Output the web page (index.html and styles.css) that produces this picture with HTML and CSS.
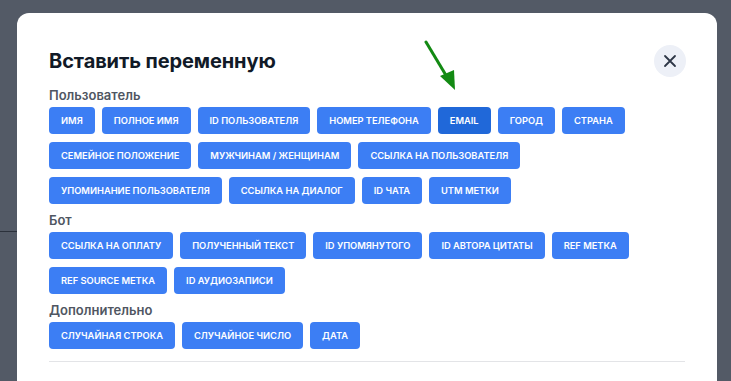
FILE: index.html
```html
<!DOCTYPE html>
<html lang="ru">
<head>
<meta charset="utf-8">
<title>Вставить переменную</title>
<link rel="stylesheet" href="styles.css">
</head>
<body>
<div class="backdrop">
  <div class="bg-line"></div>
  <div class="modal">
    <div class="header">
      <h2 class="title">Вставить переменную</h2>
      <button class="close" aria-label="Закрыть">
        <svg width="14" height="14" viewBox="0 0 14 14"><path d="M2 2 L12 12 M12 2 L2 12" stroke="#2d3646" stroke-width="1.8" stroke-linecap="round"/></svg>
      </button>
    </div>
    <div class="section">
      <div class="label">Пользователь</div>
      <div class="chips">
        <span class="chip">Имя</span>
        <span class="chip">Полное имя</span>
        <span class="chip">ID пользователя</span>
        <span class="chip">Номер телефона</span>
        <span class="chip active">Email</span>
        <span class="chip">Город</span>
        <span class="chip">Страна</span>
        <span class="chip">Семейное положение</span>
        <span class="chip">Мужчинам / Женщинам</span>
        <span class="chip">Ссылка на пользователя</span>
        <span class="chip">Упоминание пользователя</span>
        <span class="chip">Ссылка на диалог</span>
        <span class="chip">ID чата</span>
        <span class="chip">UTM метки</span>
      </div>
    </div>
    <div class="section">
      <div class="label">Бот</div>
      <div class="chips">
        <span class="chip">Ссылка на оплату</span>
        <span class="chip">Полученный текст</span>
        <span class="chip">ID упомянутого</span>
        <span class="chip">ID автора цитаты</span>
        <span class="chip">REF метка</span>
        <span class="chip">REF source метка</span>
        <span class="chip">ID аудиозаписи</span>
      </div>
    </div>
    <div class="section last">
      <div class="label">Дополнительно</div>
      <div class="chips">
        <span class="chip">Случайная строка</span>
        <span class="chip">Случайное число</span>
        <span class="chip">Дата</span>
      </div>
    </div>
    <div class="divider"></div>
  </div>
  <svg class="arrow" width="40" height="56" viewBox="0 0 40 56">
    <path d="M3 2 L24 37" stroke="#138a13" stroke-width="3" stroke-linecap="round" fill="none"/>
    <path d="M17 36 L31 30 L32 50 Z" fill="#138a13"/>
  </svg>
</div>
</body>
</html>
```
FILE: styles.css
```css
* { box-sizing: border-box; }
html, body { margin: 0; padding: 0; }
body {
  width: 731px;
  height: 381px;
  overflow: hidden;
  font-family: Inter, "Noto Sans", sans-serif;
  background: #535a66;
}
.backdrop {
  position: relative;
  width: 731px;
  height: 381px;
  padding: 13px 14px 0 17px;
}
.bg-line {
  position: absolute;
  left: 0;
  top: 231px;
  width: 17px;
  height: 1px;
  background: #2b313b;
}
.modal {
  background: #fff;
  border-radius: 12px 12px 0 0;
  height: 368px;
  padding: 32px 32px 0 32px;
}
.header {
  display: flex;
  align-items: center;
  justify-content: space-between;
  margin-right: -1px;
  height: 32px;
  margin-bottom: 9px;
}
.title {
  margin: 0;
  font-size: 20px;
  line-height: 28px;
  font-weight: 700;
  color: #111a27;
  letter-spacing: -0.1px;
}
.close {
  width: 32px;
  height: 32px;
  border-radius: 50%;
  border: none;
  background: #edf0f7;
  display: flex;
  align-items: center;
  justify-content: center;
  padding: 0;
}
.section { margin-bottom: 7px; }
.section.last { margin-bottom: 0; }
.label {
  font-size: 13px;
  line-height: 18px;
  font-weight: 600;
  color: #4f5662;
  margin-bottom: 3px;
}
.chips {
  display: flex;
  flex-wrap: wrap;
  gap: 8px 7px;
}
.chip {
  display: inline-flex;
  align-items: center;
  height: 27px;
  padding: 0 12px;
  border-radius: 4px;
  background: #3c7ef4;
  color: #fff;
  font-size: 9.3px;
  font-weight: 600;
  text-transform: uppercase;
  letter-spacing: 0;
  white-space: nowrap;
}
.chip.active { background: #2068d9; }
.divider {
  height: 1px;
  background: #e3e4e7;
  margin-top: 12px;
}
.arrow {
  position: absolute;
  left: 423px;
  top: 40px;
}
```
